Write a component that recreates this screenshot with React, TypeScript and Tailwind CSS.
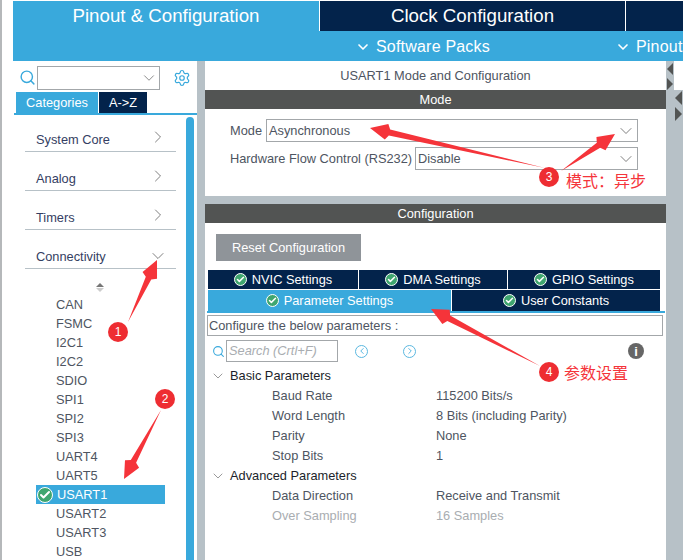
import React from 'react';
import { ChevronDown, ChevronRight, Search, Settings, Check, ChevronLeft } from 'lucide-react';

const categories = ['System Core', 'Analog', 'Timers'];
const peripherals = ['CAN', 'FSMC', 'I2C1', 'I2C2', 'SDIO', 'SPI1', 'SPI2', 'SPI3', 'UART4', 'UART5', 'USART1', 'USART2', 'USART3', 'USB'];

const OkBadge = ({ size = 13 }: { size?: number }) => (
  <span className="inline-flex items-center justify-center rounded-full bg-[#3fa66f] border border-white shrink-0" style={{ width: size, height: size }}>
    <Check size={size - 4} strokeWidth={4} className="text-white" />
  </span>
);

const Select = ({ text, className }: { text: string; className: string }) => (
  <div className={`h-[23px] border border-[#a3a7aa] flex items-center justify-between pl-[2px] pr-[1px] text-[#4e5561] ${className}`}>
    <span>{text}</span>
    <ChevronDown size={20} strokeWidth={1} className="text-[#666]" />
  </div>
);

// red screenshot arrow, thin at the tail and wide at the head
const Arrow = ({ x1, y1, x2, y2 }: { x1: number; y1: number; x2: number; y2: number }) => {
  const len = Math.hypot(x2 - x1, y2 - y1);
  const ux = (x2 - x1) / len;
  const uy = (y2 - y1) / len;
  const nx = -uy;
  const ny = ux;
  const bx = x2 - ux * 17;
  const by = y2 - uy * 17;
  const nb = bx - ux * 3;
  const mb = by - uy * 3;
  const pts = [
    [x1, y1],
    [nb + nx * 3, mb + ny * 3],
    [bx + nx * 8, by + ny * 8],
    [x2, y2],
    [bx - nx * 8, by - ny * 8],
    [nb - nx * 3, mb - ny * 3],
  ];
  return <polygon points={pts.map((p) => p.join(',')).join(' ')} fill="#f5343a" />;
};

const Badge = ({ n, className }: { n: number; className: string }) => (
  <div className={`absolute w-[20px] h-[20px] rounded-full bg-[#ee2d32] text-white text-[12px] flex items-center justify-center ${className}`}>{n}</div>
);

const Row = ({ label, value, muted }: { label: string; value: string; muted?: boolean }) => (
  <div className={`h-[20px] flex items-center ${muted ? 'text-[#a9adb1]' : 'text-[#4e5561]'}`}>
    <span className="w-[231px] pl-[67px] shrink-0">{label}</span>
    <span>{value}</span>
  </div>
);

const SubTab = ({ label, className }: { label: string; className: string }) => (
  <div className={`h-full flex items-center justify-center gap-[5px] text-white ${className}`}>
    <OkBadge />
    <span>{label}</span>
  </div>
);

const TreeHead = ({ label }: { label: string }) => (
  <div className="h-[20px] flex items-center text-[#1c1f2b] pl-[5px] gap-[4px]">
    <ChevronDown size={16} strokeWidth={1} className="text-[#666]" />
    <span>{label}</span>
  </div>
);

export default function App() {
  return (
    <div className="relative w-[683px] h-[560px] overflow-hidden bg-white text-[12.8px] font-['Liberation_Sans',Arial,sans-serif] flex">
      <div className="w-[13px] shrink-0 bg-white border-l-[2px] border-[#b5b8ba]" />
      <div className="flex-1 min-w-0 flex flex-col pt-[1px]">
        {/* top navigation */}
        <div className="h-[60px] shrink-0 bg-[#39a9dc] flex flex-col">
          <div className="h-[30px] flex text-white text-[18.7px]">
            <div className="w-[306px] flex items-center justify-center">Pinout &amp; Configuration</div>
            <div className="w-[306px] bg-[#03234b] border-l border-white flex items-center justify-center">Clock Configuration</div>
            <div className="flex-1 bg-[#03234b] border-l border-white" />
          </div>
          <div className="h-[30px] flex items-center text-white text-[16px] tracking-[0.2px] pt-[1px]">
            <ChevronDown size={16} strokeWidth={2.5} className="ml-[342px]" />
            <span className="ml-[5px]">Software Packs</span>
            <ChevronDown size={16} strokeWidth={2.5} className="ml-[125px]" />
            <span className="ml-[5px]">Pinout</span>
          </div>
        </div>

        <div className="flex-1 min-h-0 flex bg-[#b7c1c7]">
          {/* left panel */}
          <div className="w-[184px] shrink-0 bg-white flex flex-col">
            <div className="h-[31px] flex items-center pl-[6px] pt-[2px]">
              <Search size={17} strokeWidth={2} className="text-[#39a9dc]" />
              <div className="ml-[1px] w-[123px] h-[24px] border border-[#a3a7aa] flex items-center justify-end pr-[1px]">
                <ChevronDown size={18} strokeWidth={1} className="text-[#666]" />
              </div>
              <Settings size={18} strokeWidth={1.6} className="ml-[13px] text-[#39a9dc]" />
            </div>
            <div className="h-[21px] flex pl-[3px] text-white">
              <div className="w-[82px] bg-[#39a9dc] flex items-center justify-center">Categories</div>
              <div className="w-[48px] ml-[1px] bg-[#03234b] flex items-center justify-center">A-&gt;Z</div>
            </div>
            <div className="h-[2px] bg-[#39a9dc] ml-[1px]" />
            <div className="flex-1 min-h-0 flex">
              <div className="w-[173px] pl-[12px] flex flex-col text-[#343e62] overflow-hidden">
                {categories.map((c, i) => (
                  <div key={c} className={`${i === 0 ? 'h-[37px]' : 'h-[39px]'} w-[151px] shrink-0 border-b border-[#b7c1c7] flex items-end justify-between pb-[2px] pl-[11px] pr-[8px]`}>
                    <span>{c}</span>
                    <ChevronRight size={20} strokeWidth={1} className="text-[#666] mb-[2px]" />
                  </div>
                ))}
                <div className="h-[39px] w-[151px] shrink-0 border-b border-[#b7c1c7] flex items-end justify-between pb-[2px] pl-[11px] pr-[8px]">
                  <span>Connectivity</span>
                  <ChevronDown size={20} strokeWidth={1} className="text-[#666]" />
                </div>
                <div className="h-[26px] shrink-0 flex flex-col items-center justify-end pr-[12px] pb-[3px] leading-none">
                  <span className="w-0 h-0 border-x-[4px] border-x-transparent border-b-[4px] border-b-[#777]" />
                  <span className="mt-[1px] w-0 h-0 border-x-[4px] border-x-transparent border-t-[4px] border-t-[#ccc]" />
                </div>
                {peripherals.map((p) =>
                  p === 'USART1' ? (
                    <div key={p} className="h-[19px] shrink-0 w-[129px] ml-[11px] bg-[#39a9dc] text-white flex items-center gap-[4px] pl-[1px]">
                      <OkBadge size={16} />
                      <span>{p}</span>
                    </div>
                  ) : (
                    <div key={p} className="h-[19px] shrink-0 flex items-center pl-[31px] text-[#4e5561]">{p}</div>
                  ),
                )}
              </div>
              <div className="w-[8px] mt-[2px] rounded-t-[4px] bg-[#39a9dc]" />
            </div>
          </div>

          {/* right panel */}
          <div className="w-[461px] shrink-0 ml-[8px] flex flex-col gap-[8px]">
            <div className="h-[135px] shrink-0 bg-white flex flex-col text-[#4e5561]">
              <div className="h-[29px] flex items-center justify-center">USART1 Mode and Configuration</div>
              <div className="h-[19px] bg-[#525453] text-white flex items-center justify-center">Mode</div>
              <div className="pl-[25px] pr-[28px] pt-[10px] flex flex-col gap-[5px]">
                <div className="flex items-center">
                  <span className="w-[36px] shrink-0">Mode</span>
                  <Select text="Asynchronous" className="flex-1" />
                </div>
                <div className="flex items-center">
                  <span className="w-[185px] shrink-0">Hardware Flow Control (RS232)</span>
                  <Select text="Disable" className="flex-1" />
                </div>
              </div>
            </div>

            <div className="flex-1 min-h-0 bg-white flex flex-col">
              <div className="h-[19px] shrink-0 bg-[#525453] text-white flex items-center justify-center">Configuration</div>
              <div className="mt-[11px] ml-[11px] w-[145px] h-[27px] shrink-0 bg-[#8f9499] text-white flex items-center justify-center">Reset Configuration</div>
              <div className="mt-[9px] ml-[3px] w-[452px] h-[19px] shrink-0 flex gap-[1px]">
                <SubTab label="NVIC Settings" className="w-[150px] bg-[#03234b]" />
                <SubTab label="DMA Settings" className="w-[148px] bg-[#03234b]" />
                <SubTab label="GPIO Settings" className="flex-1 bg-[#03234b]" />
              </div>
              <div className="mt-[1px] ml-[3px] w-[452px] h-[21px] shrink-0 flex gap-[1px]">
                <SubTab label="Parameter Settings" className="w-[243px] bg-[#39a9dc]" />
                <SubTab label="User Constants" className="flex-1 bg-[#03234b]" />
              </div>
              <div className="ml-[2px] w-[458px] h-[2px] shrink-0 bg-[#39a9dc]" />
              <div className="mt-[2px] ml-[2px] w-[456px] h-[21px] shrink-0 border border-[#a3a7aa] flex items-center pl-[1px] text-[#4e5561]">Configure the below parameters :</div>
              <div className="mt-[4px] h-[22px] shrink-0 flex items-center pl-[7px]">
                <Search size={13} strokeWidth={2} className="text-[#39a9dc]" />
                <div className="ml-[1px] w-[112px] h-[22px] border border-[#a3a7aa] flex items-center pl-[2px] italic text-[#a9adb1]">Search (Crtl+F)</div>
                <span className="ml-[17px] w-[13px] h-[13px] rounded-full border border-[#5bb8e0] flex items-center justify-center">
                  <ChevronLeft size={10} strokeWidth={2} className="text-[#39a9dc]" />
                </span>
                <span className="ml-[35px] w-[13px] h-[13px] rounded-full border border-[#5bb8e0] flex items-center justify-center">
                  <ChevronRight size={10} strokeWidth={2} className="text-[#39a9dc]" />
                </span>
                <span className="ml-[212px] w-[16px] h-[16px] rounded-full bg-[#666] text-white text-[13px] font-bold leading-none flex items-center justify-center">i</span>
              </div>
              <div className="mt-[4px] flex flex-col">
                <TreeHead label="Basic Parameters" />
                <Row label="Baud Rate" value="115200 Bits/s" />
                <Row label="Word Length" value="8 Bits (including Parity)" />
                <Row label="Parity" value="None" />
                <Row label="Stop Bits" value="1" />
                <TreeHead label="Advanced Parameters" />
                <Row label="Data Direction" value="Receive and Transmit" />
                <Row label="Over Sampling" value="16 Samples" muted />
              </div>
            </div>
          </div>
        </div>
      </div>

      {/* collapse handles */}
      <div className="absolute left-[674px] top-[61px] w-[9px] h-[29px] bg-white" />
      <div className="absolute left-[667px] top-[63px] w-0 h-0 border-y-[6px] border-y-transparent border-r-[6px] border-r-[#525453]" />
      <div className="absolute left-[667px] top-[78px] w-0 h-0 border-y-[6px] border-y-transparent border-l-[6px] border-l-[#525453]" />
      <div className="absolute left-[675px] top-[91px] w-0 h-0 border-y-[7px] border-y-transparent border-r-[7px] border-r-[#525453]" />
      <div className="absolute left-[675px] top-[107px] w-0 h-0 border-y-[7px] border-y-transparent border-l-[7px] border-l-[#525453]" />

      {/* red annotations drawn over the screenshot */}
      <svg className="absolute inset-0" width={683} height={560}>
        <Arrow x1={128} y1={322} x2={157} y2={260} />
        <Arrow x1={161} y1={410} x2={124} y2={479} />
        <Arrow x1={545} y1={168} x2={370} y2={128} />
        <Arrow x1={561} y1={171} x2={615} y2={134} />
        <Arrow x1={540} y1={366} x2={431} y2={309} />
      </svg>
      <Badge n={1} className="left-[108px] top-[322px]" />
      <Badge n={2} className="left-[155px] top-[389px]" />
      <Badge n={3} className="left-[539px] top-[167px]" />
      <Badge n={4} className="left-[539px] top-[362px]" />
      <div className="absolute left-[566px] top-[170px] text-[16px] leading-[20px] text-[#f5343a] font-['Noto_Sans_CJK_SC',sans-serif]">模式：异步</div>
      <div className="absolute left-[564px] top-[362px] text-[16px] leading-[20px] text-[#f5343a] font-['Noto_Sans_CJK_SC',sans-serif]">参数设置</div>
    </div>
  );
}
